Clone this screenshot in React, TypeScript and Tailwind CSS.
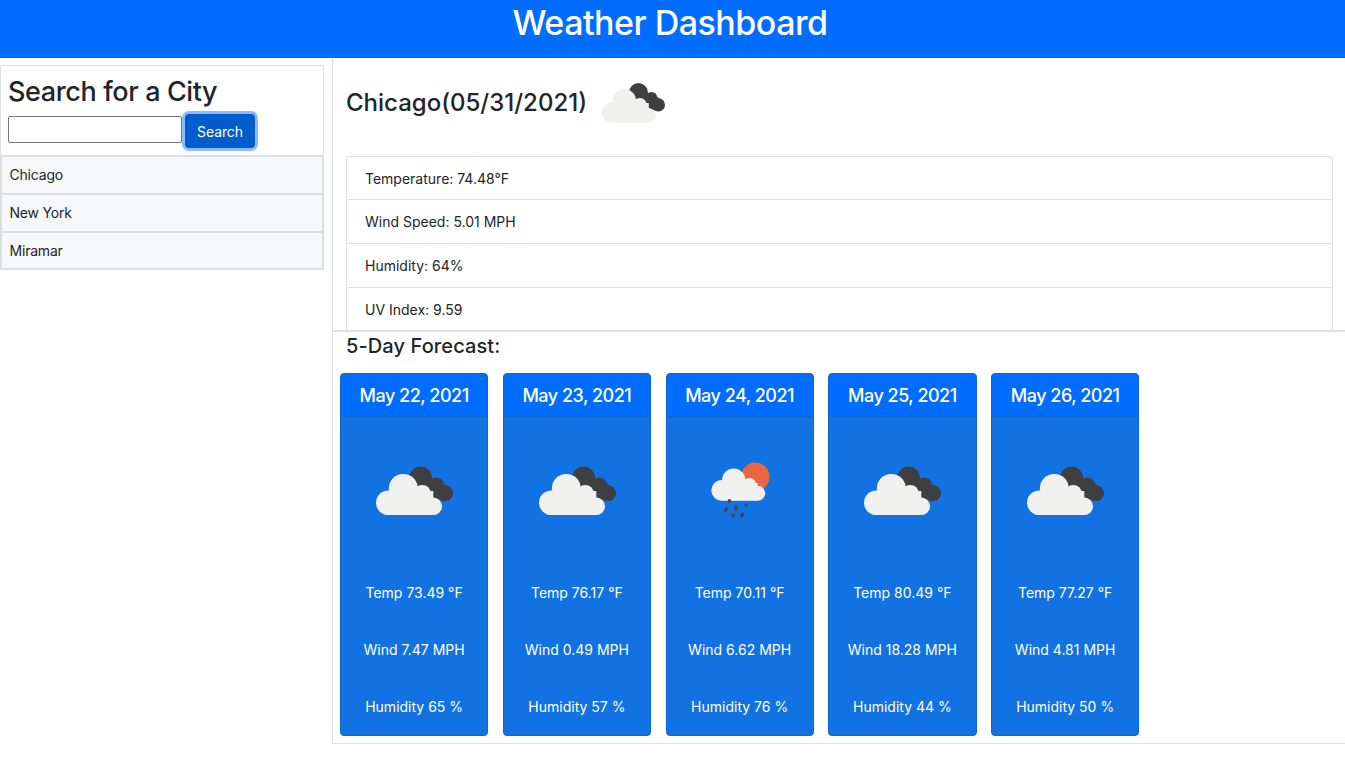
const cities = ["Chicago", "New York", "Miramar"];

const stats = [
  "Temperature: 74.48°F",
  "Wind Speed: 5.01 MPH",
  "Humidity: 64%",
  "UV Index: 9.59",
];

const forecast = [
  { date: "May 22, 2021", temp: "73.49", wind: "7.47", humidity: "65", rain: false },
  { date: "May 23, 2021", temp: "76.17", wind: "0.49", humidity: "57", rain: false },
  { date: "May 24, 2021", temp: "70.11", wind: "6.62", humidity: "76", rain: true },
  { date: "May 25, 2021", temp: "80.49", wind: "18.28", humidity: "44", rain: false },
  { date: "May 26, 2021", temp: "77.27", wind: "4.81", humidity: "50", rain: false },
];

// overcast clouds, drawn on a 100 unit box like the original weather image
const CloudIcon = ({ className }: { className: string }) => (
  <svg viewBox="0 0 100 100" className={className}>
    <g fill="#3f3e40">
      <circle cx="56.7" cy="37" r="11.4" />
      <circle cx="72.5" cy="43.5" r="7" />
      <circle cx="81" cy="52.3" r="8" />
      <path d="M50 36 L73 38 L86 47 L79 60 L60 52 Z" />
    </g>
    <g fill="#f0f0ef">
      <circle cx="24.3" cy="61.7" r="12.3" />
      <circle cx="39.3" cy="47.3" r="14.4" />
      <circle cx="58.3" cy="52.3" r="8.4" />
      <circle cx="69.3" cy="65.3" r="8.7" />
      <rect x="24.3" y="50" width="45" height="24" />
    </g>
  </svg>
);

const RainIcon = ({ className }: { className: string }) => (
  <svg viewBox="0 0 100 100" className={className}>
    <circle cx="65.3" cy="35.7" r="14.2" fill="#ea6642" />
    <g fill="#f0f0ef">
      <circle cx="31.7" cy="49.4" r="10.4" />
      <circle cx="43.7" cy="39" r="11.6" />
      <circle cx="59.3" cy="44" r="7" />
      <circle cx="67.7" cy="52.3" r="7.5" />
      <rect x="31.7" y="42" width="36" height="17.8" />
    </g>
    <g stroke="#444" strokeWidth="3">
      <path d="M39.8 58.4 L39 61.6" />
      <path d="M36.8 66.6 L35.2 71.2" />
      <path d="M46.8 64.6 L45.2 69.2" />
      <path d="M56.6 62.8 L55.6 65.6" />
      <path d="M43.6 73 L42.6 76" />
      <path d="M52.8 72 L51.2 76.6" />
    </g>
  </svg>
);

const App = () => {
  return (
    <div className="font-['Inter',sans-serif] text-[#212529] bg-white min-h-[771px]">
      <header className="h-[58px] bg-[#016dff] text-white text-center">
        <h1 className="text-[34px] leading-[45px] font-medium tracking-[-0.5px] pr-[5px]">Weather Dashboard</h1>
      </header>

      <div className="flex">
        <aside className="w-[332px] shrink-0 pt-[7px]">
          <div className="w-[324px]">
            <div className="h-[91px] border border-[#dfe1e3] pt-[9px] pl-[7px]">
              <h2 className="text-[27px] leading-[33px] font-medium tracking-[-0.38px]">Search for a City</h2>
              <div className="flex items-start gap-[3px] mt-[6px]">
                <input
                  type="text"
                  className="w-[174px] h-[27px] mt-[2px] bg-white border border-[#767676] rounded-[2px]"
                />
                <button className="h-[34px] w-[70px] bg-[#015ccc] text-white text-[14px] tracking-[-0.1px] rounded-[4px] ring-[3px] ring-[#8dbcfd]">
                  Search
                </button>
              </div>
            </div>
            <div className="-mt-[1px] border-x-2 border-t-2 border-[#dbdfe3]">
              {cities.map((city, i) => (
                <div
                  key={city}
                  className={`${i < 2 ? "h-[38px]" : "h-[37px]"} border-b-2 border-[#dbdfe3] bg-[#f7f8fa] pl-[7.5px] text-[14px] tracking-[-0.2px] leading-[36px]`}
                >
                  {city}
                </div>
              ))}
            </div>
          </div>
        </aside>

        <main className="flex-1 h-[686px] border-l border-b border-[#dfe1e3]">
          <div className="h-[98px] pl-[13px] flex items-center">
            <h2 className="text-[24px] font-medium leading-[29px] -mt-[10px] whitespace-nowrap">Chicago(05/31/2021)</h2>
            <CloudIcon className="w-[82px] h-[82px] ml-[5px] -mt-[8px]" />
          </div>

          <ul className="h-[174px] ml-[13px] mr-[12px] border border-b-0 border-[#dfe1e3] rounded-t-[4px]">
            {stats.map((stat, i) => (
              <li
                key={stat}
                className={`${i === 0 ? "h-[43px]" : i === 3 ? "h-[42px]" : "h-[44px]"} pl-[18px] text-[14px] leading-[43px] ${i < 3 ? "border-b border-[#dfe1e3]" : ""}`}
              >
                {stat}
              </li>
            ))}
          </ul>

          <section className="border-t-2 border-[#dde0e3] pt-[1px]">
            <h3 className="ml-[13px] text-[20px] font-medium leading-[26px] tracking-[0.1px]">5-Day Forecast:</h3>
            <div className="flex gap-[14.5px] ml-[7px] mt-[14px]">
              {forecast.map((day) => (
                <div
                  key={day.date}
                  className="w-[148.25px] h-[363px] bg-[#1272e2] border border-[#0b66d6] rounded-[4px] overflow-hidden text-white text-center"
                >
                  <div className="h-[43px] bg-[#016dff] border-b border-[#0b66d6] text-[18px] tracking-[-0.5px] font-medium leading-[43px]">
                    {day.date}
                  </div>
                  <div className="flex justify-center pt-[24px]">
                    {day.rain ? (
                      <RainIcon className="w-[100px] h-[100px]" />
                    ) : (
                      <CloudIcon className="w-[100px] h-[100px]" />
                    )}
                  </div>
                  <div className="flex flex-col gap-[36px] mt-[41px] text-[14px] leading-[21px]">
                    <p>Temp {day.temp} °F</p>
                    <p>Wind {day.wind} MPH</p>
                    <p>Humidity {day.humidity} %</p>
                  </div>
                </div>
              ))}
            </div>
          </section>
        </main>
      </div>
    </div>
  );
};

export default App;
